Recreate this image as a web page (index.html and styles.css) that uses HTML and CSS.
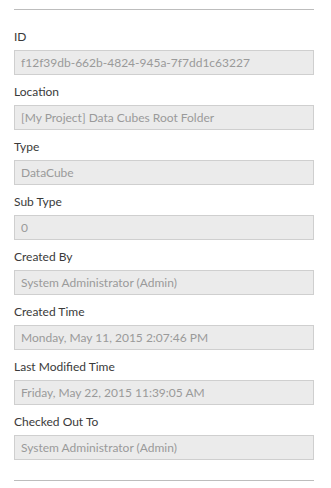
FILE: index.html
```html
<!DOCTYPE html>
<html>
<head>
<meta charset="utf-8">
<link rel="stylesheet" href="styles.css">
</head>
<body>
<div class="panel">
  <div class="rule"></div>
  <div class="fields">
    <div class="field"><div class="label">ID</div><div class="input">f12f39db-662b-4824-945a-7f7dd1c63227</div></div>
    <div class="field"><div class="label">Location</div><div class="input">[My Project] Data Cubes Root Folder</div></div>
    <div class="field"><div class="label">Type</div><div class="input">DataCube</div></div>
    <div class="field"><div class="label">Sub Type</div><div class="input">0</div></div>
    <div class="field"><div class="label">Created By</div><div class="input">System Administrator (Admin)</div></div>
    <div class="field"><div class="label">Created Time</div><div class="input">Monday, May 11, 2015 2:07:46 PM</div></div>
    <div class="field"><div class="label">Last Modified Time</div><div class="input">Friday, May 22, 2015 11:39:05 AM</div></div>
    <div class="field"><div class="label">Checked Out To</div><div class="input">System Administrator (Admin)</div></div>
  </div>
  <div class="rule"></div>
</div>
</body>
</html>
```
FILE: styles.css
```css
html, body {
  margin: 0;
  padding: 0;
  background: #ffffff;
}
body {
  font-family: Lato, "Open Sans", sans-serif;
  font-size: 12px;
  color: #333333;
}
.panel {
  padding: 9px 17px 0 14px;
}
.rule {
  height: 1px;
  background: #bdbdbd;
}
.fields {
  display: flex;
  flex-direction: column;
  gap: 9px;
  padding: 19px 0 20px;
}
.field {
  display: flex;
  flex-direction: column;
  gap: 5px;
}
.label {
  line-height: 16px;
  color: #3a3a3a;
}
.input {
  box-sizing: border-box;
  height: 25px;
  line-height: 23px;
  padding: 0 6px;
  border: 1px solid #cfcfcf;
  background: #ebebeb;
  color: #9a9a9a;
  white-space: nowrap;
  overflow: hidden;
}
```
